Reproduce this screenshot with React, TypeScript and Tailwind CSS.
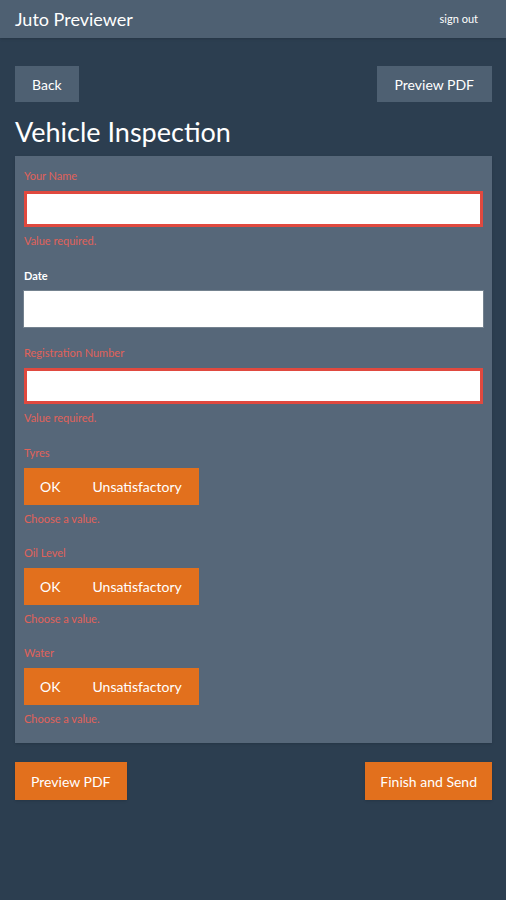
import React from "react";

const Field = ({ label, error, gap = "mb-[21px]", children }: { label: string; error?: string; gap?: string; children: React.ReactNode }) => {
  return (
    <div className={gap}>
      <div className={`text-[11px] leading-[14px] ${error ? "text-[#e0625a]" : "text-white font-bold"}`}>{label}</div>
      {children}
      {error && <div className="mt-[7px] text-[11px] leading-[14px] text-[#e0625a]">{error}</div>}
    </div>
  );
};

const Choice = () => {
  return (
    <div className="mt-[8px] flex w-fit h-[37px] bg-[#e2701d] text-white text-[14px]">
      <button className="px-4">OK</button>
      <button className="pl-4 pr-[17px]">Unsatisfactory</button>
    </div>
  );
};

const App = () => {
  return (
    <div className="min-h-[900px] bg-[#2c3e50] font-['Lato',sans-serif]">
      {/* Header */}
      <header className="h-[38px] bg-[#4e6072] flex items-center justify-between pl-[15px] pr-[28px] shadow-sm">
        <span className="text-white text-[18px]">Juto Previewer</span>
        <span className="text-white text-[11px]">sign out</span>
      </header>

      <main className="pl-[15px] pr-[14px]">
        <div className="mt-[28px] flex justify-between">
          <button className="h-[36px] px-[17px] bg-[#4e6072] text-white text-[14px]">Back</button>
          <button className="h-[36px] px-[18px] bg-[#4e6072] text-white text-[14px]">Preview PDF</button>
        </div>

        <h1 className="mt-[14px] text-[27px] leading-[32px] text-white mb-[8px]">Vehicle Inspection</h1>

        {/* Form panel */}
        <div className="bg-[#566779] px-[9px] pt-[13px] pb-[17px] shadow">
          <Field label="Your Name" error="Value required.">
            <input className="mt-[8px] block w-full h-[36px] bg-white border-[3px] border-[#e0493f] outline-none" />
          </Field>
          <Field label="Date" gap="mb-[18px]">
            <input className="mt-[7px] -mx-px block w-[calc(100%+2px)] h-[38px] bg-white border border-[#74828f] outline-none" />
          </Field>
          <Field label="Registration Number" error="Value required.">
            <input className="mt-[8px] block w-full h-[36px] bg-white border-[3px] border-[#e0493f] outline-none" />
          </Field>
          <Field label="Tyres" error="Choose a value." gap="mb-[20px]">
            <Choice />
          </Field>
          <Field label="Oil Level" error="Choose a value." gap="mb-[20px]">
            <Choice />
          </Field>
          <Field label="Water" error="Choose a value." gap="mb-0">
            <Choice />
          </Field>
        </div>

        <div className="mt-[19px] flex justify-between">
          <button className="h-[38px] px-[16px] bg-[#e2701d] text-white text-[14px] shadow">Preview PDF</button>
          <button className="h-[38px] px-[15px] bg-[#e2701d] text-white text-[14px] shadow">Finish and Send</button>
        </div>
      </main>
    </div>
  );
};

export default App;
